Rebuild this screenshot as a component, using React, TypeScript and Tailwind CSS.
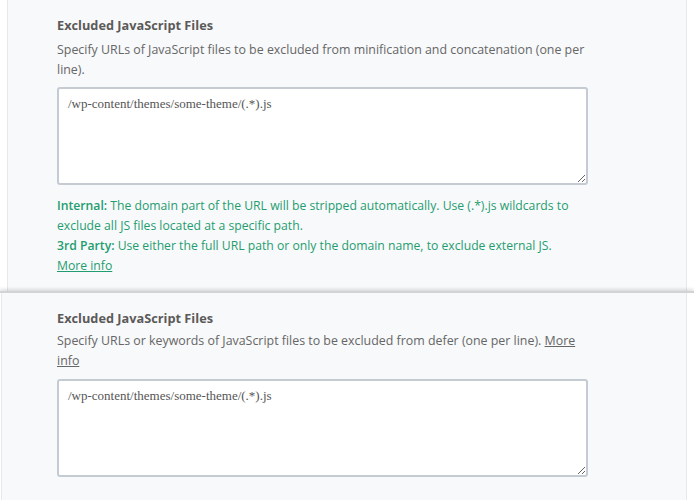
import React from "react";

const sans = { fontFamily: '"Open Sans", "Noto Sans", sans-serif' };

function FileBox({ value }: { value: string }) {
  return (
    <textarea
      defaultValue={value}
      className="block w-[531px] h-[98px] rounded-[3px] border-2 border-[#c5cbd3] bg-white px-[9px] py-[6px] text-[13px] leading-[18px] text-[#555] outline-none font-['Liberation_Serif',serif]"
    />
  );
}

export default function App() {
  return (
    <div className="w-[694px] h-[500px] overflow-hidden bg-white" style={sans}>
      {/* Minify / combine panel */}
      <div className="ml-[7px] w-[680px] h-[291px] border-x border-[#e6e8eb] bg-[#f8f9fb] pl-[49px] pt-[15px]">
        <h4 className="text-[12.75px] leading-[20px] font-bold text-[#5c5a58]">
          Excluded JavaScript Files
        </h4>
        <p className="mt-[5px] w-[540px] text-[12.4px] leading-[20px] text-[#666]">
          Specify URLs of JavaScript files to be excluded from minification and
          concatenation (one per line).
        </p>
        <div className="mt-[7px]">
          <FileBox value="/wp-content/themes/some-theme/(.*).js" />
        </div>
        <div className="mt-[11px] w-[531px] text-[12.2px] leading-[20px] text-[#1f9d6f]">
          <p>
            <strong className="font-semibold">Internal:</strong> The domain part
            of the URL will be stripped automatically. Use (.*).js wildcards to
            exclude all JS files located at a specific path.
          </p>
          <p>
            <strong className="font-semibold">3rd Party:</strong> Use either the
            full URL path or only the domain name, to exclude external JS.
          </p>
          <a href="#" className="underline">
            More info
          </a>
        </div>
      </div>

      {/* Defer panel */}
      <div className="w-full border-t-2 border-[#d2d3d5] shadow-[0_-2px_3px_rgba(0,0,0,0.12)] bg-white">
        <div className="ml-px w-[686px] h-[220px] border-x border-[#e6e8eb] bg-[#f8f9fb] pl-[55px] pt-[15px]">
          <h4 className="text-[12.75px] leading-[20px] font-bold text-[#5c5a58]">
            Excluded JavaScript Files
          </h4>
          <p className="mt-[3px] w-[531px] text-[12.4px] leading-[20px] text-[#666]">
            Specify URLs or keywords of JavaScript files to be excluded from defer
            (one per line).{" "}
            <a href="#" className="underline">
              More info
            </a>
          </p>
          <div className="mt-[8px]">
            <FileBox value="/wp-content/themes/some-theme/(.*).js" />
          </div>
        </div>
      </div>
    </div>
  );
}
